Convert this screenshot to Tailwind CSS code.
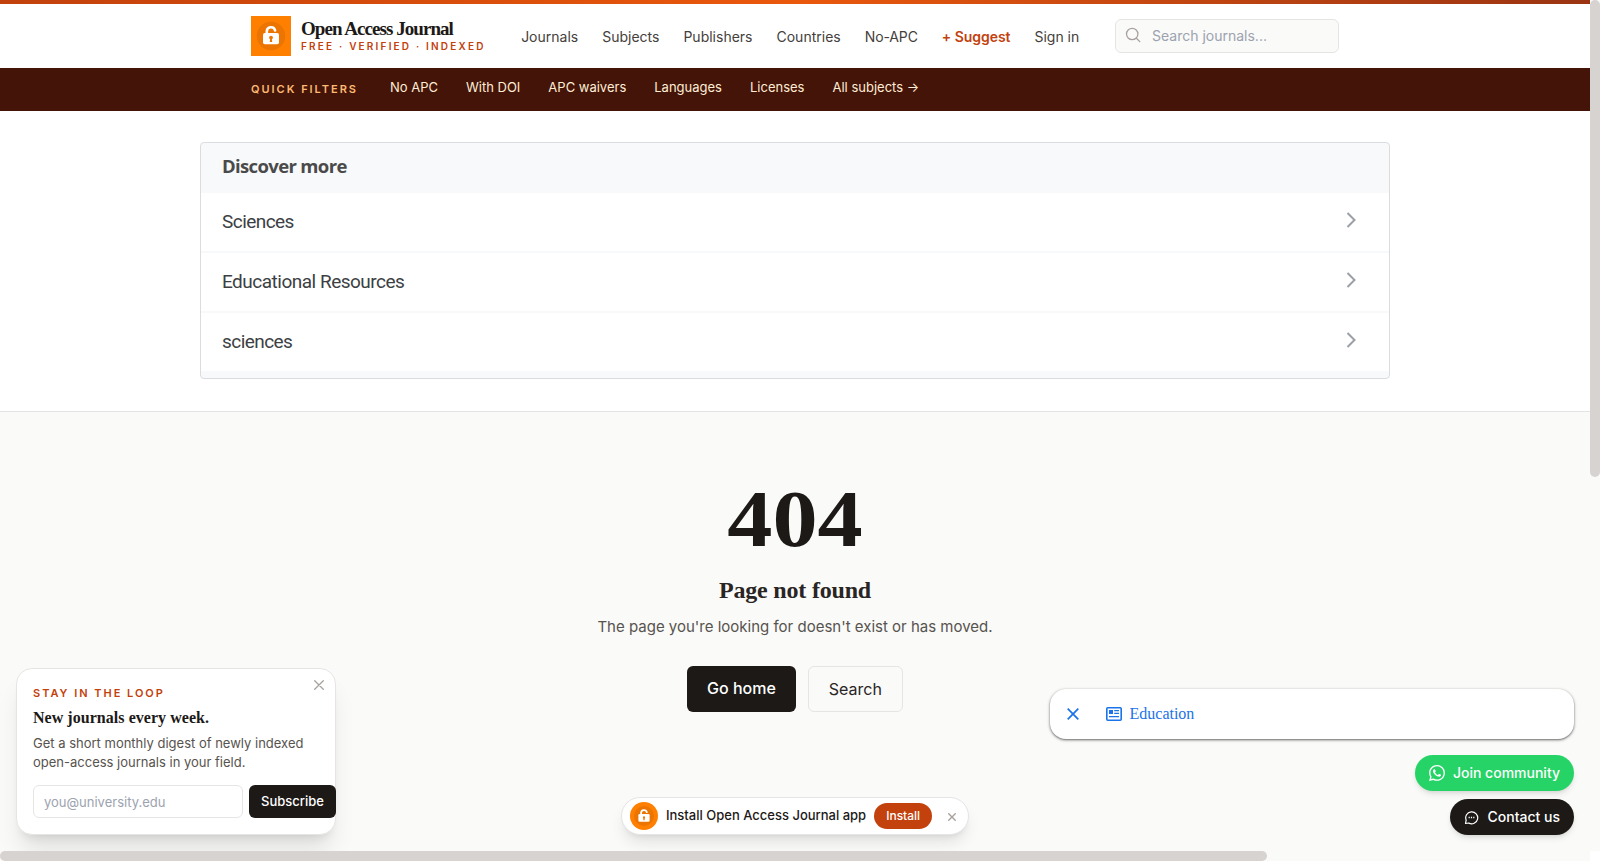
<!DOCTYPE html>
<html lang="en">
<head>
  <meta charset="UTF-8" />
  <title>Page not found - Open Access Journal</title>
  <script src="https://cdn.jsdelivr.net/npm/@tailwindcss/browser@4"></script>
</head>
<body class="relative h-screen overflow-hidden bg-[#fafaf9] text-[#1c1917] font-['Inter',sans-serif]">
  <div class="w-[1590px]">
    <div class="h-1 bg-linear-to-r from-[#c2410c] via-[#ea580c] to-[#9a3412]"></div>

    <header class="h-16 bg-white">
      <div class="mx-auto flex h-full max-w-6xl items-center px-8">
        <a href="#" class="flex items-center gap-2.5">
          <svg class="size-10" viewBox="0 0 40 40">
            <rect width="40" height="40" fill="#ff7f00" />
            <circle cx="20" cy="20" r="14.3" fill="#eb7500" />
            <path d="M15.8 18v-2.6a4.2 4.2 0 0 1 8.3-.9" fill="none" stroke="#fff" stroke-width="2.6" stroke-linecap="round" />
            <rect x="12" y="17" width="16" height="11.2" rx="1.8" fill="#fff" />
            <circle cx="20" cy="21.6" r="1.9" fill="#eb7500" />
            <path d="M19.2 22h1.6l.4 4h-2.4z" fill="#eb7500" />
          </svg>
          <span class="flex flex-col">
            <span class="whitespace-nowrap font-['Liberation_Serif',serif] text-[19px] leading-5 font-semibold tracking-[-0.95px]">Open Access Journal</span>
            <span class="mt-px mb-px whitespace-nowrap text-[10px] leading-3 font-semibold tracking-[2.2px] text-[#c2410c]">FREE · VERIFIED · INDEXED</span>
          </span>
        </a>
        <nav class="mt-px ml-[35.5px] flex gap-6 whitespace-nowrap text-sm text-[#44403c]">
          <a href="#">Journals</a>
          <a href="#">Subjects</a>
          <a href="#">Publishers</a>
          <a href="#">Countries</a>
          <a href="#" class="tracking-[-0.1px]">No-APC</a>
          <a href="#" class="font-semibold tracking-[-0.05px] text-[#c2410c]">+ Suggest</a>
          <a href="#">Sign in</a>
        </nav>
        <div class="ml-auto flex h-[34px] w-56 items-center gap-[11px] rounded-md border border-[#e7e5e4] bg-[#fafaf9] pl-[9px]">
          <svg class="mb-0.5 size-4" viewBox="0 0 16 16" fill="none" stroke="#a8a29e" stroke-width="1.3" stroke-linecap="round">
            <circle cx="7.2" cy="7" r="5.7" />
            <path d="m11.4 11.2 3.4 3.4" />
          </svg>
          <input type="text" placeholder="Search journals..." class="w-44 text-sm outline-none placeholder:text-[#9ca3af]">
        </div>
      </div>
    </header>

    <div class="h-[43px] bg-[#431407]">
      <div class="mx-auto flex h-full max-w-6xl items-center gap-7 px-8 pb-1 whitespace-nowrap text-[13px] text-[#fed7aa]">
        <span class="mt-1 mr-1 text-[11px] font-semibold tracking-[1.98px] text-[#fdba74]">QUICK FILTERS</span>
        <a href="#" class="text-[#ffedd5]">No APC</a>
        <a href="#" class="text-[#ffedd5]">With DOI</a>
        <a href="#" class="text-[#ffedd5]">APC waivers</a>
        <a href="#" class="text-[#ffedd5]">Languages</a>
        <a href="#" class="text-[#ffedd5]">Licenses</a>
        <a href="#" class="text-[#ffedd5]">All subjects →</a>
      </div>
    </div>

    <section class="h-[301px] border-b border-[#e4e4e4] bg-white pt-[31px]">
      <div class="mx-auto h-[237px] w-[1190px] overflow-hidden rounded border border-[#dadce0] bg-[#f8f9fb] text-[19px] text-[#3c4043]">
        <h2 class="h-[50px] pt-[9px] pl-[21px] font-['Open_Sans',sans-serif] text-[18.5px] font-bold tracking-[-0.65px] text-[#4a4a4a]">Discover more</h2>
        <div class="flex flex-col gap-0.5 font-['Roboto',sans-serif]">
          <a href="#" class="flex h-[58px] items-center justify-between bg-white pr-8 pl-[21px]">
            <span class="tracking-[-0.55px]">Sciences</span>
            <svg class="mb-1 h-4 w-3" viewBox="0 0 12 16" fill="none" stroke="#9aa0a6" stroke-width="2"><path d="m2.5 1 7 7-7 7" /></svg>
          </a>
          <a href="#" class="flex h-[58px] items-center justify-between bg-white pr-8 pl-[21px]">
            <span class="tracking-[-0.5px]">Educational Resources</span>
            <svg class="mb-1 h-4 w-3" viewBox="0 0 12 16" fill="none" stroke="#9aa0a6" stroke-width="2"><path d="m2.5 1 7 7-7 7" /></svg>
          </a>
          <a href="#" class="flex h-[58px] items-center justify-between bg-white pr-8 pl-[21px]">
            <span class="tracking-[-0.55px]">sciences</span>
            <svg class="mb-1 h-4 w-3" viewBox="0 0 12 16" fill="none" stroke="#9aa0a6" stroke-width="2"><path d="m2.5 1 7 7-7 7" /></svg>
          </a>
        </div>
      </div>
    </section>

    <main class="flex flex-col items-center pt-[67px]">
      <h1 class="scale-x-[1.13] font-['Liberation_Serif',serif] text-[80px] leading-20 font-bold">404</h1>
      <h2 class="mt-[15px] font-['Liberation_Serif',serif] text-2xl leading-8 font-bold tracking-[-0.2px] text-[#292524]">Page not found</h2>
      <p class="mt-[9px] text-[15px] leading-6 text-[#57534e]">The page you're looking for doesn't exist or has moved.</p>
      <div class="mt-[27px] flex gap-3">
        <a href="#" class="rounded-md bg-[#1c1917] px-5 py-2.5 font-medium text-white">Go home</a>
        <a href="#" class="rounded-md border border-[#e7e5e4] px-5 py-2.5 text-[#292524]">Search</a>
      </div>
    </main>
  </div>

  <!-- Newsletter popup -->
  <aside class="absolute top-[668px] left-4 h-[167px] w-80 rounded-2xl border border-[#e7e5e4] bg-white px-4 pt-4 shadow-xl">
    <svg class="absolute top-[11px] right-[11px] size-[10px]" viewBox="0 0 10 10" fill="none" stroke="#a8a29e" stroke-width="1.3" stroke-linecap="round"><path d="m.7.7 8.6 8.6M9.3.7.7 9.3" /></svg>
    <p class="text-[11px] leading-4 font-semibold tracking-[1.98px] text-[#c2410c]">STAY IN THE LOOP</p>
    <h3 class="mt-[7px] font-['Liberation_Serif',serif] text-base leading-5 font-bold tracking-[0.04px]">New journals every week.</h3>
    <p class="mt-1.5 text-[13px] leading-[19px] text-[#57534e]">Get a short monthly digest of newly indexed open-access journals in your field.</p>
    <form class="mt-[13px] flex w-[303px] gap-1.5">
      <input type="email" placeholder="you@university.edu" class="h-[33px] w-[210px] shrink-0 rounded-md border border-[#e7e5e4] px-2.5 text-[13px] outline-none placeholder:text-[#9ca3af]">
      <button type="button" class="h-[33px] w-[87px] shrink-0 rounded-md bg-[#1c1917] text-[13px] font-medium text-white">Subscribe</button>
    </form>
  </aside>

  <!-- Install prompt -->
  <div class="absolute top-[797px] left-[621px] flex h-[38px] w-[348px] items-center rounded-full border border-[#e7e5e4] bg-white pl-2 whitespace-nowrap shadow-lg">
    <svg class="size-7" viewBox="0 0 28 28">
      <circle cx="14" cy="14" r="14" fill="#ff7f00" />
      <circle cx="14" cy="14" r="10" fill="#eb7500" />
      <path d="M11.1 13v-2.2a2.9 2.9 0 0 1 5.7-.6" fill="none" stroke="#fff" stroke-width="1.8" stroke-linecap="round" />
      <rect x="8.4" y="12" width="11.2" height="7.8" rx="1.2" fill="#fff" />
      <path d="M13 15.2a1 1 0 1 1 2 0l-.5 3h-1z" fill="#eb7500" />
    </svg>
    <span class="ml-2 text-[13px] font-medium">Install Open Access Journal app</span>
    <button class="ml-2 h-[26px] w-[58px] rounded-full bg-[#c2410c] text-xs font-medium text-white">Install</button>
    <svg class="mt-0.5 ml-4 size-2" viewBox="0 0 8 8" fill="none" stroke="#a8a29e" stroke-width="1.4"><path d="m.3.3 7.4 7.4M7.7.3.3 7.7" /></svg>
  </div>

  <!-- Education bar -->
  <div class="absolute top-[689px] left-[1050px] flex h-[50px] w-[524px] items-center rounded-2xl bg-white pl-[17px] font-['Liberation_Serif',serif] text-base text-[#1a73e8] shadow-[0_1px_2px_rgba(0,0,0,0.45),0_1px_3px_1px_rgba(0,0,0,0.15)]">
    <svg class="size-3" viewBox="0 0 12 12" fill="none" stroke="currentColor" stroke-width="1.7"><path d="m.7.7 10.6 10.6M11.3.7.7 11.3" /></svg>
    <svg class="ml-[27px] h-[14px] w-4" viewBox="0 0 16 14">
      <rect x=".8" y=".8" width="14.4" height="12.4" rx="1" fill="none" stroke="currentColor" stroke-width="1.6" />
      <path d="M3 3h4v4H3zM8.2 3H13v1.2H8.2zM8.2 5.8H13V7H8.2zM3 9h10v1.3H3z" fill="currentColor" />
    </svg>
    <span class="ml-[7.5px]">Education</span>
  </div>

  <!-- Floating buttons -->
  <div class="absolute top-[755px] right-[26px] flex flex-col items-end gap-2 whitespace-nowrap text-sm font-medium text-white">
    <a href="#" class="flex h-9 items-center gap-2 rounded-full bg-[#25d366] px-3.5 shadow-md">
      <svg class="size-4" viewBox="0 0 24 24" fill="currentColor"><path d="M17.47 14.38c-.3-.15-1.76-.87-2.03-.97-.27-.1-.47-.15-.67.15-.2.3-.77.97-.94 1.16-.17.2-.35.22-.64.08-.3-.15-1.26-.46-2.39-1.48-.88-.79-1.48-1.76-1.65-2.06-.17-.3-.02-.46.13-.6.13-.14.3-.35.44-.53.15-.17.2-.3.3-.5.1-.2.05-.37-.02-.52-.08-.15-.67-1.61-.92-2.2-.24-.58-.49-.5-.67-.51h-.57c-.2 0-.52.07-.79.37-.27.3-1.04 1.02-1.04 2.48s1.06 2.87 1.21 3.07c.15.2 2.1 3.2 5.08 4.49.71.3 1.26.49 1.69.62.71.23 1.36.2 1.87.12.57-.09 1.76-.72 2-1.41.25-.7.25-1.29.18-1.41-.08-.13-.27-.2-.57-.35M12.05 21.8a9.87 9.87 0 0 1-5.03-1.38l-.36-.22-3.74.98 1-3.64-.24-.38a9.86 9.86 0 0 1-1.51-5.26c0-5.45 4.44-9.88 9.89-9.88a9.88 9.88 0 0 1 9.88 9.89c0 5.45-4.44 9.88-9.89 9.88m8.42-18.3A11.8 11.8 0 0 0 12.05 0C5.5 0 .16 5.34.16 11.9c0 2.1.55 4.14 1.59 5.94L.06 24l6.3-1.65a11.9 11.9 0 0 0 5.69 1.45c6.55 0 11.89-5.34 11.89-11.9a11.8 11.8 0 0 0-3.47-8.4" /></svg>
      <span>Join community</span>
    </a>
    <a href="#" class="flex h-9 items-center gap-[9px] rounded-full bg-[#1c1917] px-3.5 shadow-md">
      <svg class="size-[15px]" viewBox="0 0 15 15" fill="none" stroke="currentColor" stroke-width="1.2" stroke-linejoin="round">
        <path d="M2.2 10.2A6 6 0 1 1 4.7 13l-3.2.5z" />
        <path d="M4.6 7.5h1.2M6.9 7.5h1.2M9.2 7.5h1.2" stroke-width="1.3" />
      </svg>
      <span>Contact us</span>
    </a>
  </div>

  <!-- Scrollbars -->
  <div class="absolute top-0 right-0 h-full w-2.5 bg-[#fafaf9]">
    <div class="h-[477px] rounded-full bg-[#d6d3d1]"></div>
  </div>
  <div class="absolute bottom-0 left-0 h-2.5 w-[1590px] bg-[#fafaf9]">
    <div class="h-full w-[1267px] rounded-full bg-[#d6d3d1]"></div>
  </div>
  <div class="absolute right-0 bottom-0 size-2.5 bg-white"></div>
</body>
</html>
